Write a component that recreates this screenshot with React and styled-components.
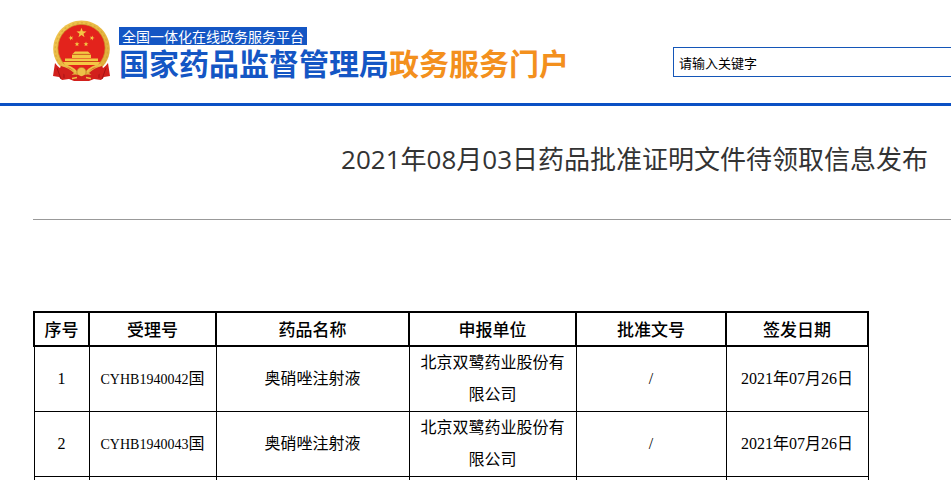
import React from "react";
import styled, { createGlobalStyle } from "styled-components";

const GlobalStyle = createGlobalStyle`
  * { box-sizing: border-box; }
  html { overflow: hidden; }
  body {
    margin: 0;
    background: #fff;
    color: #000;
    font-family: "Noto Sans CJK SC", sans-serif;
  }
`;

const Header = styled.header`
  display: flex;
  align-items: flex-start;
  justify-content: space-between;
  padding: 20px 0 20px 52px;
  border-bottom: 3px solid #0a50c4;
`;

const Brand = styled.a`
  display: flex;
  gap: 8px;
  color: #1456c4;
  text-decoration: none;
  white-space: nowrap;
`;

const EmblemDrawing = styled.svg`
  display: block;
  flex: none;
  width: 59px;
  height: 63px;
`;

const BrandText = styled.span`
  display: flex;
  flex-direction: column;
  align-items: flex-start;
  padding-top: 7px;
`;

const Platform = styled.span`
  padding: 0 3px;
  background: #1456c4;
  color: #fff;
  font-size: 14px;
  line-height: 18px;
`;

const SiteName = styled.span`
  font-size: 30px;
  font-weight: 700;
  line-height: 34px;
`;

const Accent = styled.span`
  color: #f3901d;
`;

const Search = styled.input`
  flex: 0 1 278px;
  min-width: 120px;
  height: 30px;
  margin-top: 27px;
  padding: 0 5px;
  border: 1px solid #1456b8;
  border-right: 0;
  border-radius: 0;
  outline: 0;
  background: #fff;
  color: #000;
  font: 13px "Noto Sans CJK SC", sans-serif;
  &::placeholder { color: #000; opacity: 1; }
`;

const Main = styled.main`
  padding-left: 33px;
`;

const Title = styled.h1`
  margin: 0;
  padding: 32px 23px 39px 0;
  border-bottom: 1px solid #999;
  color: #333;
  font: 400 26px/42px "Open Sans", "Noto Sans CJK SC", sans-serif;
  text-align: right;
  white-space: nowrap;
`;

const Table = styled.table`
  width: 100%;
  max-width: 835px;
  margin-top: 91px;
  border-collapse: collapse;
  table-layout: fixed;
  text-align: center;
`;

const Col = styled.col`
  width: ${(p) => p.$share}px;
`;

const HeadCell = styled.th`
  height: 34px;
  padding: 0;
  border: 2px solid #000;
  font-size: 17px;
  font-weight: 500;
  line-height: 32px;
`;

const Cell = styled.td`
  height: 65px;
  padding: 0 10px;
  border: 1px solid #000;
  font: 400 16px/32px "Liberation Serif", "Noto Sans CJK SC", serif;
`;

const CodeCell = styled(Cell)`
  padding: 0;
`;

const Code = styled.span`
  font-size: 14px;
`;

const STAR = "M0-5 1.2-1.6 4.8-1.5 1.9.6 2.9 4 0 2-2.9 4-1.9.6-4.8-1.5-1.2-1.6Z";

function Emblem() {
  return (
    <EmblemDrawing viewBox="0 0 59 63" aria-hidden="true">
      <defs>
        <linearGradient id="gold" x1="0" y1="0" x2="1" y2="1">
          <stop offset="0" stopColor="#f2ca55" />
          <stop offset="0.5" stopColor="#e8b842" />
          <stop offset="1" stopColor="#dca93a" />
        </linearGradient>
      </defs>
      <path d="M3 43Q8 50 16 52H43Q51 50 56 43L58 56 52 57 49 60 42 59 37 61H22L17 59 10 60 7 57 1 56Z" fill="#d2201c" />
      <path d="M5 48 9 59M54 48 50 59M12 52V58M47 52V58" fill="none" stroke="#a31316" strokeWidth="1" />
      <path d="M29.5.4C45 .4 57.8 13 57.8 29 57.8 40 51 48 43 53L36 56H23L16 53C8 48 1.2 40 1.2 29 1.2 13 14 .4 29.5.4Z" fill="url(#gold)" />
      <path d="M11 48C5 43 3.3 36 3.3 29A26.2 26.2 0 0 1 55.7 29C55.7 36 54 43 48 48" fill="none" stroke="#c9962b" strokeWidth="1.4" strokeDasharray="2 2.4" opacity="0.4" />
      <circle cx="29.5" cy="28" r="23.6" fill="#e3231c" stroke="#c99028" strokeWidth="0.7" />
      <g fill="#f4c744">
        <path d={STAR} transform="translate(29.5 13) scale(1.05)" />
        <path d={STAR} transform="translate(19 18) rotate(-15) scale(.52)" />
        <path d={STAR} transform="translate(40 18) rotate(15) scale(.52)" />
        <path d={STAR} transform="translate(25 24.2) scale(.52)" />
        <path d={STAR} transform="translate(34 24.2) scale(.52)" />
        <path d="M23 31.5h13l2.5 2.5H20.500ZM20 34.500h19V38H20ZM13 38.500h33V41H13ZM11 42h37L46 45H13Z" />
      </g>
      <path d="M20 34.300h19M13 41.500h33" stroke="#b95b18" strokeWidth="0.6" />
      <path d="M9 46Q17 48 22 53L17 57Q12 55 7 50ZM50 46Q42 48 37 53L42 57Q47 55 52 50Z" fill="#d2201c" />
      <path d="M10 45Q20 46 24 52M49 45Q39 46 35 52" fill="none" stroke="#edbf48" strokeWidth="2" />
      <circle cx="29.5" cy="52" r="4.6" fill="#edbf48" stroke="#b97b22" strokeWidth="0.7" />
      <path d="M18 56Q24 53 29.5 56.500Q35 53 41 56L38 60 29.500 58.500 21 60Z" fill="#d2201c" />
      <path d="M20 58.500 25 57.500M39 58.500 34 57.500" stroke="#edbf48" strokeWidth="1.4" />
    </EmblemDrawing>
  );
}

const columns = [
  ["序号", 55],
  ["受理号", 127],
  ["药品名称", 193],
  ["申报单位", 167],
  ["批准文号", 150],
  ["签发日期", 142],
];

const rows = [
  { id: 1, code: "CYHB1940042" },
  { id: 2, code: "CYHB1940043" },
];

export default function App() {
  return (
    <>
      <GlobalStyle />
      <Header>
        <Brand href="#">
          <Emblem />
          <BrandText>
            <Platform>全国一体化在线政务服务平台</Platform>
            <SiteName>
              国家药品监督管理局<Accent>政务服务门户</Accent>
            </SiteName>
          </BrandText>
        </Brand>
        <Search type="text" aria-label="请输入关键字" placeholder="请输入关键字" />
      </Header>
      <Main>
        <Title>2021年08月03日药品批准证明文件待领取信息发布</Title>
        <Table>
          <colgroup>
            {columns.map(([name, share]) => <Col key={name} $share={share} />)}
          </colgroup>
          <thead>
            <tr>{columns.map(([name]) => <HeadCell key={name} scope="col">{name}</HeadCell>)}</tr>
          </thead>
          <tbody>
            {rows.map((row) => (
              <tr key={row.id}>
                <Cell>{row.id}</Cell>
                <CodeCell><Code>{row.code}</Code>国</CodeCell>
                <Cell>奥硝唑注射液</Cell>
                <Cell>北京双鹭药业股份有限公司</Cell>
                <Cell>/</Cell>
                <Cell>2021年07月26日</Cell>
              </tr>
            ))}
            <tr>
              <Cell /><Cell /><Cell /><Cell /><Cell /><Cell />
            </tr>
          </tbody>
        </Table>
      </Main>
    </>
  );
}
